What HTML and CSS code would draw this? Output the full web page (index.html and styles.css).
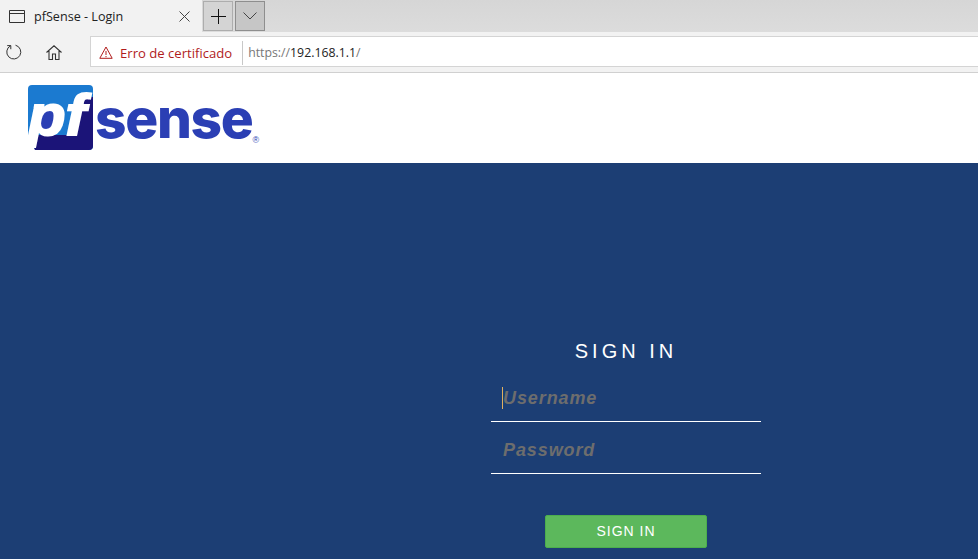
FILE: index.html
```html
<!DOCTYPE html>
<html lang="en">
<head>
    <meta charset="UTF-8">
    <meta name="viewport" content="width=device-width, initial-scale=1.0">
    <title>pfSense - Login</title>
    <link rel="stylesheet" href="styles.css">
</head>
<body>

    <!-- Browser chrome -->
    <div class="tabbar">
        <div class="tab">
            <svg class="tab-icon" width="16" height="13" viewBox="0 0 16 13"><path d="M.5.5h15v12H.5zM.5 3.500h15" fill="none" stroke="#333"/></svg>
            <span class="tab-title">pfSense - Login</span>
            <svg class="tab-close" width="11" height="11" viewBox="0 0 11 11"><path d="M.5.5l10 10M10.500.5l-10 10" fill="none" stroke="#444"/></svg>
        </div>
        <div class="tab-btn">
            <svg width="15" height="15" viewBox="0 0 15 15"><path d="M7.500 0v15M0 7.500h15" fill="none" stroke="#111"/></svg>
        </div>
        <div class="tab-btn tab-btn-dark">
            <svg width="14" height="8" viewBox="0 0 14 8"><path d="M.5.5L7 7l6.500-6.500" fill="none" stroke="#444"/></svg>
        </div>
    </div>

    <div class="toolbar">
        <svg class="tool-icon" width="16" height="16" viewBox="0 0 16 16"><path d="M4.500 1.800A7 7 0 1 0 9.500 1.200M4.800 5.200V1.600H1.200" fill="none" stroke="#333"/></svg>
        <svg class="tool-icon tool-home" width="16" height="15" viewBox="0 0 16 15"><path d="M.5 7.500L8 .8l7.500 6.700M3 6v8.500h3.500V9h3v5.500H13V6" fill="none" stroke="#333" stroke-width="1.100"/></svg>
        <div class="addressbar">
            <svg class="warn" width="14" height="13" viewBox="0 0 14 13"><path d="M7 1L.8 12.300h12.400zM7 5v4M7 10v1.200" fill="none" stroke="#b01c1c"/></svg>
            <span class="cert">Erro de certificado</span>
            <span class="url"><span class="url-scheme">https://</span>192.168.1.1<span class="url-scheme">/</span></span>
        </div>
    </div>

    <!-- Page -->
    <div class="header">
        <div class="logo">
            <svg class="logo-mark" width="65" height="65" viewBox="0 0 65 65">
                <rect width="65" height="65" rx="4" fill="#1b7ad0"/>
                <path d="M6 65L9 50H48L57 12H65V61a4 4 0 0 1-4 4z" fill="#1b1478"/>
                <path d="M0 52L7 65H0z" fill="#ffffff"/>
                <ellipse cx="19" cy="37" rx="9" ry="12" transform="rotate(15 19 37)" fill="#2b3fb4"/>
                <text class="logo-pf" x="0" y="50" transform="scale(1.060 1)">pf</text>
            </svg>
            <span class="logo-text">sense</span>
            <span class="logo-reg">®</span>
        </div>
    </div>

    <div class="main">
        <form class="login">
            <h1>SIGN IN</h1>
            <div class="field">
                <span class="caret"></span>
                <input type="text" placeholder="Username">
            </div>
            <div class="field">
                <input type="password" placeholder="Password">
            </div>
            <button type="button">SIGN IN</button>
        </form>
    </div>

</body>
</html>
```

FILE: styles.css
```css
html, body {
    height: 100%;
}
body {
    font-family: 'Liberation Sans', Arial, sans-serif;
    margin: 0;
    padding: 0;
    display: flex;
    flex-direction: column;
    overflow: hidden;
}
/* Browser chrome */
.tabbar {
    display: flex;
    height: 32px;
    background: linear-gradient(#d6d6d6, #dcdcdc);
    flex-shrink: 0;
}
.tab {
    width: 202px;
    background-color: #f2f2f2;
    display: flex;
    align-items: center;
    padding: 0 12px 0 9px;
    box-sizing: border-box;
}
.tab-title {
    font-family: 'Open Sans', sans-serif;
    font-size: 12.600px;
    color: #222;
    margin-left: 9px;
    flex: 1;
}
.tab-btn {
    width: 30px;
    height: 30px;
    margin: 1px 0 0 1px;
    display: flex;
    align-items: center;
    justify-content: center;
    background-color: #d4d4d4;
    border: 1px solid #adadad;
    box-sizing: border-box;
}
.tab-btn-dark {
    margin-left: 2px;
    background-color: #c6c6c6;
    border-color: #8e8e8e;
}
.toolbar {
    display: flex;
    align-items: center;
    height: 40px;
    background-color: #f2f2f2;
    border-bottom: 1px solid #d0d0d0;
    flex-shrink: 0;
}
.tool-icon {
    margin-left: 6px;
}
.tool-home {
    margin-left: 24px;
}
.addressbar {
    flex: 1;
    height: 31px;
    margin: 0 0 1px 28px;
    background-color: #ffffff;
    border: 1px solid #d4d4d4;
    border-right: none;
    display: flex;
    align-items: center;
    box-sizing: border-box;
    padding: 2px 0 0 8px;
}
.cert {
    font-family: 'Open Sans', sans-serif;
    font-size: 13.100px;
    color: #b01c1c;
    margin-left: 7px;
    padding-right: 10px;
    border-right: 1px solid #c8c8c8;
    line-height: 24px;
}
.url {
    font-family: 'Open Sans', sans-serif;
    font-size: 12.300px;
    color: #222;
    margin-left: 5px;
}
.url-scheme {
    color: #777;
}
/* Page header */
.header {
    height: 90px;
    background-color: #ffffff;
    flex-shrink: 0;
    padding: 12px 0 0 28px;
    box-sizing: border-box;
}
.logo {
    display: flex;
    align-items: flex-start;
}
.logo-mark {
    display: block;
    overflow: visible;
}
.logo-pf {
    font-family: 'Liberation Sans', sans-serif;
    font-weight: bold;
    font-style: italic;
    font-size: 58px;
    fill: #ffffff;
    stroke: #ffffff;
    stroke-width: 2px;
}
.logo-text {
    font-family: 'Inter', 'Liberation Sans', sans-serif;
    font-weight: 800;
    font-size: 55px;
    letter-spacing: -1.300px;
    line-height: 67px;
    color: #2b3fb4;
    margin-left: 2px;
}
.logo-reg {
    font-size: 9px;
    color: #2b3fb4;
    margin: 50px 0 0 0;
}
/* Login form */
.main {
    flex: 1;
    background-color: #1c3e74;
    padding-left: 491px;
}
.login {
    width: 270px;
    display: flex;
    flex-direction: column;
    align-items: center;
}
.login h1 {
    font-size: 20px;
    font-weight: normal;
    letter-spacing: 4px;
    color: #ffffff;
    margin: 177px 0 0;
    line-height: 23px;
}
.field {
    position: relative;
    width: 100%;
    height: 52px;
    box-sizing: border-box;
    border-bottom: 1px solid #ffffff;
}
.login h1 + .field {
    margin-top: 7px;
}
.field input {
    width: 100%;
    height: 100%;
    box-sizing: border-box;
    background: transparent;
    border: none;
    outline: none;
    padding: 6px 12px 0;
    font-family: 'Liberation Sans', sans-serif;
    font-size: 18px;
    font-weight: bold;
    font-style: italic;
    letter-spacing: 0.900px;
    color: #ffffff;
}
.field input::placeholder {
    color: #6d6d6d;
    opacity: 1;
}
/* Text cursor in the focused field */
.caret {
    position: absolute;
    left: 11px;
    top: 17px;
    width: 1px;
    height: 22px;
    background-color: #e0b060;
}
.login button {
    width: 162px;
    height: 33px;
    margin-top: 41px;
    padding: 0 0 2px;
    background-color: #5cb85c;
    border: 1px solid #4cae4c;
    border-radius: 2px;
    color: #ffffff;
    font-family: 'Liberation Sans', sans-serif;
    font-size: 14px;
    letter-spacing: 1px;
}
```
